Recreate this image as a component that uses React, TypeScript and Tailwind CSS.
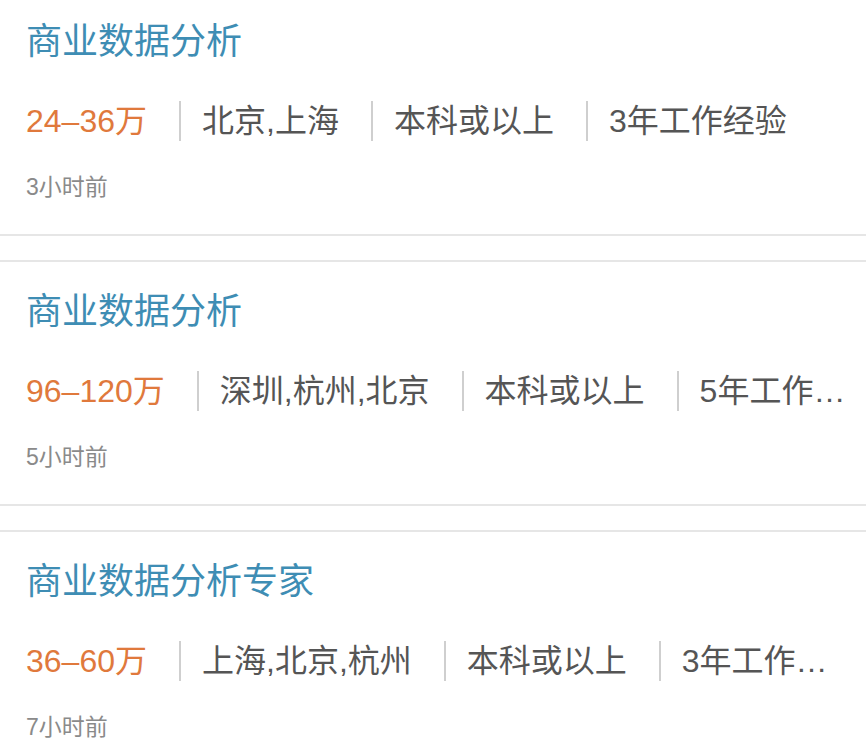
const jobs = [
  {
    title: '商业数据分析',
    salary: '24–36万',
    tags: ['北京,上海', '本科或以上', '3年工作经验'],
    time: '3小时前',
  },
  {
    title: '商业数据分析',
    salary: '96–120万',
    tags: ['深圳,杭州,北京', '本科或以上', '5年工作…'],
    time: '5小时前',
  },
  {
    title: '商业数据分析专家',
    salary: '36–60万',
    tags: ['上海,北京,杭州', '本科或以上', '3年工作…'],
    time: '7小时前',
  },
];

export default function App() {
  return (
    <div
      className="w-[866px] h-[743px] overflow-hidden bg-white"
      style={{ fontFamily: '"Liberation Sans", "Noto Sans CJK SC", sans-serif' }}
    >
      <div className="-mt-[10px] flex flex-col gap-[24px]">
        {jobs.map((job, i) => (
          <JobCard key={i} {...job} />
        ))}
      </div>
    </div>
  );
}

function JobCard({ title, salary, tags, time }: any) {
  return (
    <div className="border-y-2 border-[#e6e6e6] bg-white px-[26px] pt-[28px] pb-[32px]">
      <h2 className="text-[36px] leading-[44px] text-[#3e8db4] font-normal whitespace-nowrap">{title}</h2>
      <div className="mt-[35px] flex items-center h-[44px] text-[32px] leading-[44px] text-[#555555]">
        <span className="text-[#e0793c] whitespace-nowrap">{salary}</span>
        {tags.map((t: string, i: number) => (
          <div key={i} className="flex items-center">
            <span className="ml-[32px] mr-[21px] w-[2px] h-[40px] bg-[#cfcfcf]" />
            <span className="whitespace-nowrap">{t}</span>
          </div>
        ))}
      </div>
      <div className="mt-[29px] text-[23px] leading-[30px] text-[#8a8a8a]">{time}</div>
    </div>
  );
}
